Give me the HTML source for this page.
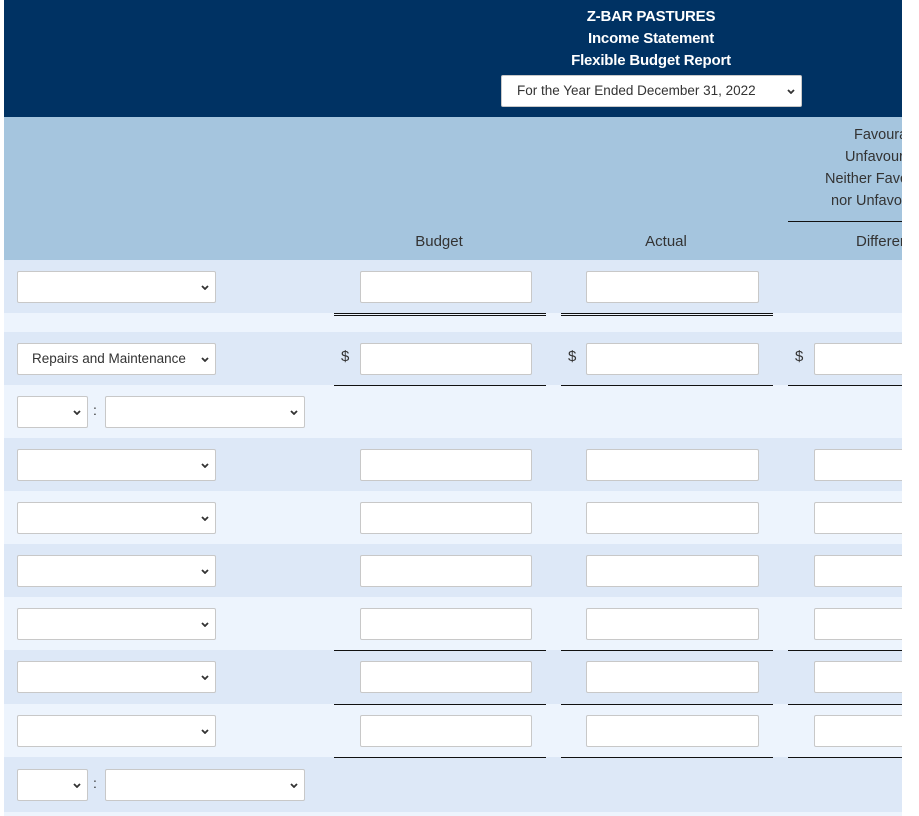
<!DOCTYPE html>
<html><head><meta charset="utf-8"><style>
*{box-sizing:border-box;margin:0;padding:0}
body{width:919px;height:816px;background:#fff;position:relative;overflow:hidden;font-family:"Liberation Sans",sans-serif;color:#333}
.a{position:absolute}
.hd{left:4px;top:0;width:898px;height:117px;background:#003263}
.ch{left:4px;top:117px;width:898px;height:143px;background:#a5c5de}
.t{color:#fff;font-weight:bold;font-size:15px;width:300px;text-align:center;left:501px;letter-spacing:-0.2px}
.dk{background:#dde8f7}.lt{background:#edf4fd}
.row{left:4px;width:898px}
.sel{background:#fff;border:1px solid #c8c8c8;border-radius:2px;height:32px}
.sel svg{position:absolute;right:6px;top:13px}
.inp{background:#fff;border:1px solid #c8c8c8;border-radius:2px;height:32px}
.ln{height:1px;background:#111}
.hl{font-size:15px;color:#333}
.clip{left:788px;top:117px;width:114px;height:143px;overflow:hidden}
.fv{position:absolute;white-space:nowrap;font-size:14.5px;color:#333}
</style></head><body>
<div class="a hd"></div>
<div class="a t" style="top:8px">Z-BAR PASTURES</div>
<div class="a t" style="top:30px">Income Statement</div>
<div class="a t" style="top:52px">Flexible Budget Report</div>
<div class="a sel" style="left:501px;top:75px;width:301px;height:32px;font-size:13.5px;padding:7px 0 0 15px">For the Year Ended December 31, 2022<svg width="8" height="5" viewBox="0 0 8 5"><path d="M1 1l3 3 3-3" fill="none" stroke="#333" stroke-width="1.8"/></svg></div>
<div class="a ch"></div>
<div class="a hl" style="left:389px;top:233px;width:100px;text-align:center">Budget</div>
<div class="a hl" style="left:616px;top:233px;width:100px;text-align:center">Actual</div>
<div class="a clip">
<div class="fv" style="left:66px;top:10px">Favourable</div>
<div class="fv" style="left:57px;top:32px">Unfavourable</div>
<div class="fv" style="left:37px;top:54px">Neither Favourable</div>
<div class="fv" style="left:43px;top:76px">nor Unfavourable</div>
</div>
<div class="a ln" style="left:788px;top:221px;width:114px"></div>
<div class="a hl" style="left:856px;top:233px;width:46px;overflow:hidden;white-space:nowrap">Difference</div>
<!-- rows -->
<div class="a row dk" style="top:260px;height:53px"></div>
<div class="a row lt" style="top:313px;height:19px"></div>
<div class="a row dk" style="top:332px;height:53px"></div>
<div class="a row lt" style="top:385px;height:53px"></div>
<div class="a row dk" style="top:438px;height:53px"></div>
<div class="a row lt" style="top:491px;height:53px"></div>
<div class="a row dk" style="top:544px;height:53px"></div>
<div class="a row lt" style="top:597px;height:53px"></div>
<div class="a row dk" style="top:650px;height:54px"></div>
<div class="a row lt" style="top:704px;height:53px"></div>
<div class="a row dk" style="top:757px;height:55px"></div>
<div class="a row lt" style="top:812px;height:4px"></div>

<!-- row1 -->
<div class="a sel" style="left:17px;top:271px;width:199px"><svg width="8" height="5" viewBox="0 0 8 5"><path d="M1 1l3 3 3-3" fill="none" stroke="#333" stroke-width="1.8"/></svg></div>
<div class="a inp" style="left:360px;top:271px;width:172px"></div>
<div class="a inp" style="left:586px;top:271px;width:173px"></div>
<div class="a ln" style="left:334px;top:313px;width:212px"></div><div class="a ln" style="left:334px;top:315px;width:212px"></div>
<div class="a ln" style="left:561px;top:313px;width:212px"></div><div class="a ln" style="left:561px;top:315px;width:212px"></div>

<!-- row3 -->
<div class="a sel" style="left:17px;top:343px;width:199px;font-size:13.5px;padding:7px 0 0 14px">Repairs and Maintenance<svg width="8" height="5" viewBox="0 0 8 5"><path d="M1 1l3 3 3-3" fill="none" stroke="#333" stroke-width="1.8"/></svg></div>
<div class="a" style="left:341px;top:348px;font-size:15px">$</div>
<div class="a inp" style="left:360px;top:343px;width:172px"></div>
<div class="a" style="left:568px;top:348px;font-size:15px">$</div>
<div class="a inp" style="left:586px;top:343px;width:173px"></div>
<div class="a" style="left:795px;top:348px;font-size:15px">$</div>
<div class="a inp" style="left:814px;top:343px;width:100px"></div>
<div class="a ln" style="left:334px;top:385px;width:212px"></div>
<div class="a ln" style="left:561px;top:385px;width:212px"></div>
<div class="a ln" style="left:788px;top:385px;width:114px"></div>

<!-- row4 -->
<div class="a sel" style="left:17px;top:396px;width:71px"><svg width="8" height="5" viewBox="0 0 8 5"><path d="M1 1l3 3 3-3" fill="none" stroke="#333" stroke-width="1.8"/></svg></div>
<div class="a" style="left:93px;top:402px;font-size:14px">:</div>
<div class="a sel" style="left:105px;top:396px;width:200px"><svg width="8" height="5" viewBox="0 0 8 5"><path d="M1 1l3 3 3-3" fill="none" stroke="#333" stroke-width="1.8"/></svg></div>

<!-- rows 5-10 -->
<div class="a sel" style="left:17px;top:449px;width:199px"><svg width="8" height="5" viewBox="0 0 8 5"><path d="M1 1l3 3 3-3" fill="none" stroke="#333" stroke-width="1.8"/></svg></div>
<div class="a inp" style="left:360px;top:449px;width:172px"></div><div class="a inp" style="left:586px;top:449px;width:173px"></div><div class="a inp" style="left:814px;top:449px;width:100px"></div>

<div class="a sel" style="left:17px;top:502px;width:199px"><svg width="8" height="5" viewBox="0 0 8 5"><path d="M1 1l3 3 3-3" fill="none" stroke="#333" stroke-width="1.8"/></svg></div>
<div class="a inp" style="left:360px;top:502px;width:172px"></div><div class="a inp" style="left:586px;top:502px;width:173px"></div><div class="a inp" style="left:814px;top:502px;width:100px"></div>

<div class="a sel" style="left:17px;top:555px;width:199px"><svg width="8" height="5" viewBox="0 0 8 5"><path d="M1 1l3 3 3-3" fill="none" stroke="#333" stroke-width="1.8"/></svg></div>
<div class="a inp" style="left:360px;top:555px;width:172px"></div><div class="a inp" style="left:586px;top:555px;width:173px"></div><div class="a inp" style="left:814px;top:555px;width:100px"></div>

<div class="a sel" style="left:17px;top:608px;width:199px"><svg width="8" height="5" viewBox="0 0 8 5"><path d="M1 1l3 3 3-3" fill="none" stroke="#333" stroke-width="1.8"/></svg></div>
<div class="a inp" style="left:360px;top:608px;width:172px"></div><div class="a inp" style="left:586px;top:608px;width:173px"></div><div class="a inp" style="left:814px;top:608px;width:100px"></div>
<div class="a ln" style="left:334px;top:650px;width:212px"></div><div class="a ln" style="left:561px;top:650px;width:212px"></div><div class="a ln" style="left:788px;top:650px;width:114px"></div>

<div class="a sel" style="left:17px;top:661px;width:199px"><svg width="8" height="5" viewBox="0 0 8 5"><path d="M1 1l3 3 3-3" fill="none" stroke="#333" stroke-width="1.8"/></svg></div>
<div class="a inp" style="left:360px;top:661px;width:172px"></div><div class="a inp" style="left:586px;top:661px;width:173px"></div><div class="a inp" style="left:814px;top:661px;width:100px"></div>
<div class="a ln" style="left:334px;top:704px;width:212px"></div><div class="a ln" style="left:561px;top:704px;width:212px"></div><div class="a ln" style="left:788px;top:704px;width:114px"></div>

<div class="a sel" style="left:17px;top:715px;width:199px"><svg width="8" height="5" viewBox="0 0 8 5"><path d="M1 1l3 3 3-3" fill="none" stroke="#333" stroke-width="1.8"/></svg></div>
<div class="a inp" style="left:360px;top:715px;width:172px"></div><div class="a inp" style="left:586px;top:715px;width:173px"></div><div class="a inp" style="left:814px;top:715px;width:100px"></div>
<div class="a ln" style="left:334px;top:757px;width:212px"></div><div class="a ln" style="left:561px;top:757px;width:212px"></div><div class="a ln" style="left:788px;top:757px;width:114px"></div>

<!-- row11 -->
<div class="a sel" style="left:17px;top:769px;width:71px"><svg width="8" height="5" viewBox="0 0 8 5"><path d="M1 1l3 3 3-3" fill="none" stroke="#333" stroke-width="1.8"/></svg></div>
<div class="a" style="left:93px;top:775px;font-size:14px">:</div>
<div class="a sel" style="left:105px;top:769px;width:200px"><svg width="8" height="5" viewBox="0 0 8 5"><path d="M1 1l3 3 3-3" fill="none" stroke="#333" stroke-width="1.8"/></svg></div>

<div class="a" style="left:902px;top:0;width:17px;height:816px;background:#fff"></div>
</body></html>
